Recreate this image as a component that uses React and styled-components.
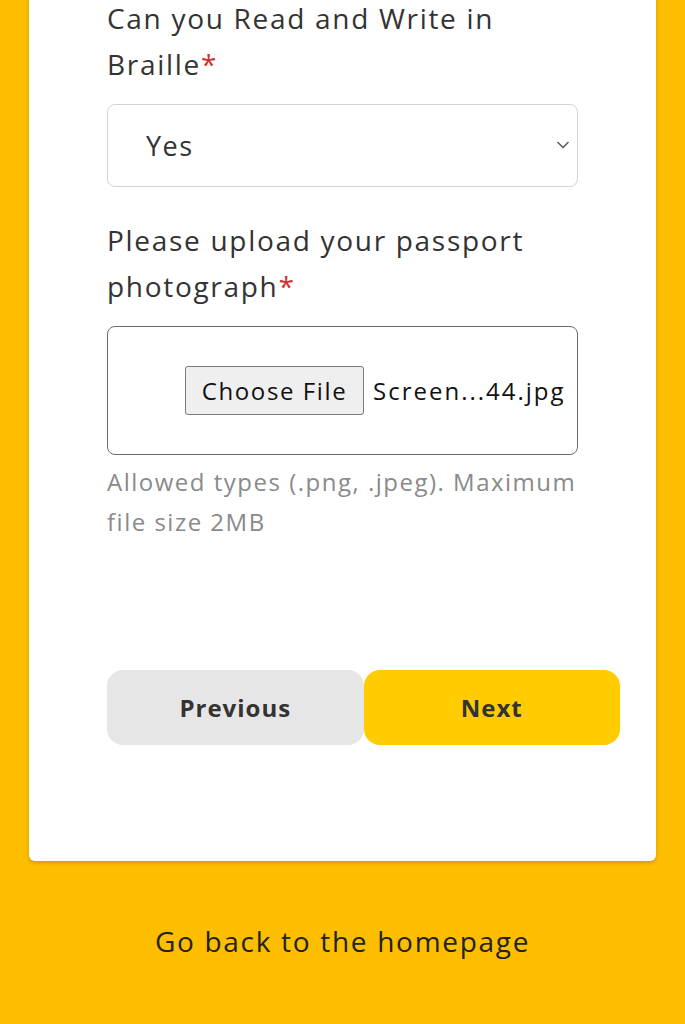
import React from "react";
import styled, { createGlobalStyle } from "styled-components";

const Global = createGlobalStyle`
  html, body { margin: 0; padding: 0; background: #FEBE00; }
  body { font-family: "Open Sans", "Noto Sans", sans-serif; }
  * { box-sizing: border-box; }
`;

const Page = styled.div`
  min-height: 100vh;
  background: #FEBE00;
  padding: 0 29px;
  overflow: hidden;
`;

const Card = styled.div`
  margin-top: -12px;
  background: #fff;
  border-radius: 6px;
  box-shadow: 0 2px 4px rgba(0, 0, 0, 0.18);
  padding: 7px 36px 116px 78px;
  display: flex;
  flex-direction: column;
`;

const Label = styled.label`
  display: block;
  font-size: 28px;
  line-height: 46px;
  color: #333;
  letter-spacing: 1.7px;
  margin-top: ${(p) => p.$mt || 0}px;
`;

const Req = styled.span`
  color: #d0312d;
`;

const SelectWrap = styled.div`
  position: relative;
  width: 471px;
  margin-top: 17px;
`;

const Select = styled.select`
  appearance: none;
  -webkit-appearance: none;
  width: 100%;
  height: 83px;
  border: 1.5px solid #d4d4d4;
  border-radius: 8px;
  background: #fff;
  padding: 0 0 0 38px;
  font-family: "Open Sans", "Noto Sans", sans-serif;
  font-size: 27px;
  letter-spacing: 1.5px;
  color: #333;
  outline: none;
`;

const Chevron = styled.svg`
  position: absolute;
  right: 8px;
  top: 36px;
  width: 14px;
  height: 10px;
  pointer-events: none;
`;

const UploadBox = styled.div`
  width: 471px;
  height: 129px;
  margin-top: 17px;
  border: 1.5px solid #6b6b6b;
  border-radius: 8px;
  display: flex;
  align-items: center;
  padding-left: 77px;
  gap: 9px;
  overflow: hidden;
`;

const FileButton = styled.button`
  flex: none;
  height: 49px;
  width: 179px;
  padding: 0;
  border: 1.5px solid #7a7a7a;
  border-radius: 3px;
  background: #efefef;
  font-family: "Open Sans", "Noto Sans", sans-serif;
  font-size: 24px;
  letter-spacing: 1.6px;
  color: #111;
`;

const FileName = styled.span`
  font-size: 24px;
  letter-spacing: 2px;
  color: #111;
  white-space: nowrap;
`;

const Help = styled.p`
  margin: 7px 0 0;
  font-size: 24px;
  line-height: 40px;
  letter-spacing: 1.5px;
  color: #8a8a8a;
  width: 492px;
`;

const ButtonRow = styled.div`
  display: flex;
  margin-top: 128px;
`;

const NavButton = styled.button`
  flex: 1;
  height: 75px;
  border: none;
  border-radius: 16px;
  background: ${(p) => (p.$primary ? "#FFCC00" : "#E6E6E6")};
  color: #333;
  font-family: "Open Sans", "Noto Sans", sans-serif;
  font-weight: 700;
  font-size: 24px;
  letter-spacing: 1px;
`;

const Footer = styled.div`
  padding: 60px 0 100px;
  text-align: center;
  font-size: 28px;
  line-height: 40px;
  letter-spacing: 1.7px;
  color: #222;
`;

const HomeLink = styled.a`
  color: #222;
  text-decoration: none;
`;

export default function App() {
  return (
    <>
      <Global />
      <Page>
        <Card>
          <Label>
            Can you Read and Write in
            <br />
            Braille<Req>*</Req>
          </Label>
          <SelectWrap>
            <Select defaultValue="yes">
              <option value="yes">Yes</option>
              <option value="no">No</option>
            </Select>
            <Chevron viewBox="0 0 14 10">
              <path d="M1.5 2 L7 7.5 L12.5 2" fill="none" stroke="#555" strokeWidth="1.4" />
            </Chevron>
          </SelectWrap>
          <Label $mt={30}>
            Please upload your passport
            <br />
            photograph<Req>*</Req>
          </Label>
          <UploadBox>
            <FileButton type="button">Choose File</FileButton>
            <FileName>Screen...44.jpg</FileName>
          </UploadBox>
          <Help>Allowed types (.png, .jpeg). Maximum file size 2MB</Help>
          <ButtonRow>
            <NavButton type="button">Previous</NavButton>
            <NavButton type="button" $primary>
              Next
            </NavButton>
          </ButtonRow>
        </Card>
        <Footer>
          <HomeLink href="#">Go back to the homepage</HomeLink>
        </Footer>
      </Page>
    </>
  );
}
